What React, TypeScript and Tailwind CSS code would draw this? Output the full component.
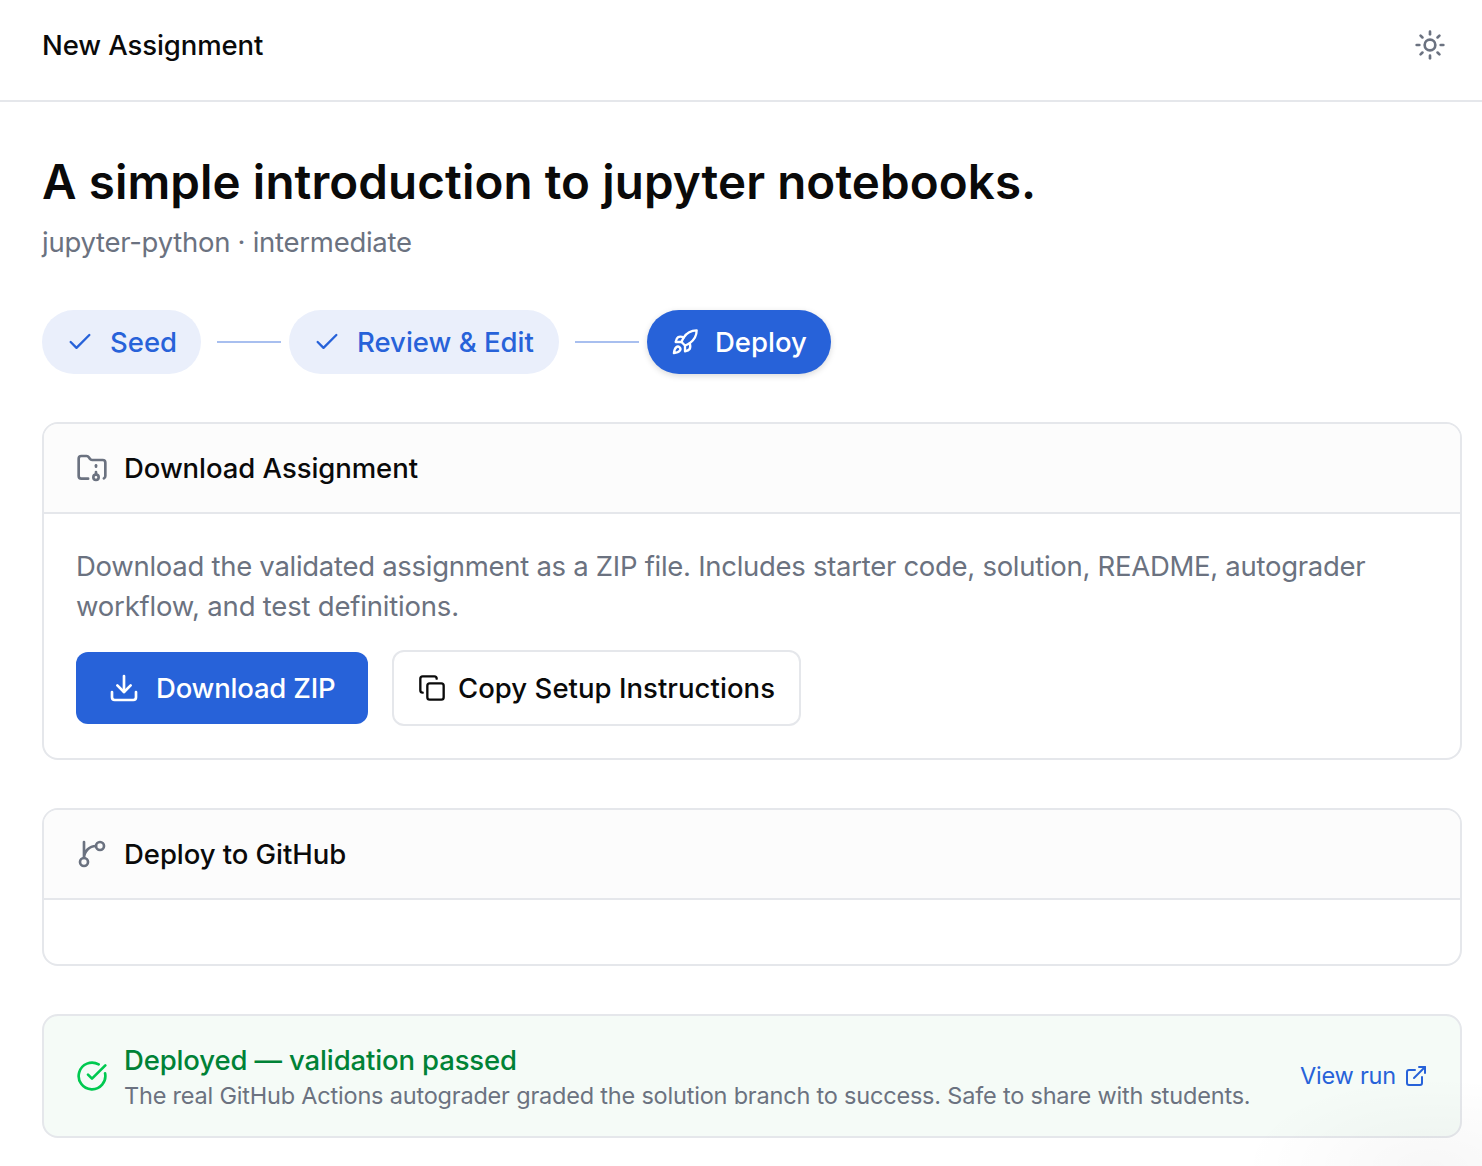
import type { ReactNode } from 'react'
import { Check, CircleCheckBig, Copy, Download, ExternalLink, FolderArchive, Rocket, Sun } from 'lucide-react'

function GitBranchIcon() {
  return (
    <svg
      viewBox="0 0 24 24"
      fill="none"
      stroke="currentColor"
      strokeWidth={2}
      strokeLinecap="round"
      strokeLinejoin="round"
      className="size-8 shrink-0 text-[#6b7280]"
    >
      <path d="M15 6a9 9 0 0 0-9 9V3" />
      <circle cx="18" cy="6" r="3" />
      <circle cx="6" cy="18" r="3" />
    </svg>
  )
}

function StepLine() {
  return <div className="ml-4 mr-2 h-0.5 w-16 shrink-0 bg-[#a8bfef]" />
}

interface CardProps {
  icon: ReactNode
  title: ReactNode
  children?: ReactNode
}

function Card({ icon, title, children }: CardProps) {
  return (
    <section className="overflow-hidden rounded-2xl border-2 border-[#e5e7eb] bg-white">
      <div className="flex items-center gap-4 border-b-2 border-[#e5e7eb] bg-[#fcfcfc] px-8 py-6">
        {icon}
        <h2 className="text-[27.5px] leading-10 font-medium tracking-[-0.06px] whitespace-nowrap">{title}</h2>
      </div>
      <div className="p-8">{children}</div>
    </section>
  )
}

export default function App() {
  return (
    <div className="relative h-[1166px] w-[1482px] overflow-hidden bg-white font-['Inter',sans-serif] text-[#0a0a0a]">
      <header className="flex h-[102px] items-start justify-between border-b-2 border-[#e5e7eb] pt-[25px] pr-9 pl-[42px]">
        <span className="text-[27.5px] leading-10 font-medium tracking-[-0.1px]">New Assignment</span>
        <Sun className="mt-1 size-8 text-[#6b7280]" />
      </header>

      <main className="pt-[50px] pr-5 pl-[42px]">
        <h1 className="text-[47.5px] leading-[60px] font-semibold tracking-[0.1px] whitespace-nowrap">
          A simple introduction to jupyter notebooks.
        </h1>
        <p className="mt-[10px] text-[27.5px] leading-10 tracking-[-0.27px] text-[#6b7280]">
          jupyter-python · intermediate
        </p>

        {/* Steps */}
        <div className="mt-12 flex items-center">
          <div className="flex h-16 w-[159px] items-center gap-4 rounded-full bg-[#eaeffb] px-6 text-[#2762d9]">
            <Check className="size-7 shrink-0" />
            <span className="text-[27.5px] leading-10 font-medium whitespace-nowrap">Seed</span>
          </div>
          <StepLine />
          <div className="flex h-16 w-[270px] items-center gap-4 rounded-full bg-[#eaeffb] px-6 text-[#2762d9]">
            <Check className="size-7 shrink-0" />
            <span className="text-[27.5px] leading-10 font-medium whitespace-nowrap">Review &amp; Edit</span>
          </div>
          <StepLine />
          <div className="flex h-16 w-[184px] items-center gap-4 rounded-full bg-[#2762d9] px-6 text-white shadow-[0_2px_6px_rgba(0,0,0,0.15)]">
            <Rocket className="size-7 shrink-0" />
            <span className="text-[27.5px] leading-10 font-medium whitespace-nowrap">Deploy</span>
          </div>
        </div>

        <div className="mt-12 flex flex-col gap-12">
          <Card icon={<FolderArchive className="size-8 shrink-0 text-[#6b7280]" />} title="Download Assignment">
            <p className="text-[27.5px] leading-10 whitespace-nowrap text-[#6b7280]">
              <span className="tracking-[-0.285px]">
                Download the validated assignment as a ZIP file. Includes starter code, solution, README, autograder
              </span>
              <br />
              <span className="tracking-[-0.2px]">workflow, and test definitions.</span>
            </p>
            <div className="mt-6 flex items-center gap-6">
              <button className="flex h-[72px] w-[292px] items-center gap-4 rounded-xl bg-[#2762d9] px-8 text-white">
                <Download className="size-8 shrink-0" />
                <span className="text-[27.5px] leading-10 font-medium tracking-[-0.2px] whitespace-nowrap">
                  Download ZIP
                </span>
              </button>
              <button className="flex h-[76px] w-[409px] items-center gap-3 rounded-xl border-2 border-[#e5e7eb] bg-white px-6">
                <Copy className="size-7 shrink-0" />
                <span className="text-[27.5px] leading-10 font-medium tracking-[0.04px] whitespace-nowrap">
                  Copy Setup Instructions
                </span>
              </button>
            </div>
          </Card>

          <Card icon={<GitBranchIcon />} title="Deploy to GitHub" />

          {/* Validation result */}
          <section className="flex items-center gap-4 rounded-2xl border-2 border-[#e5e7eb] bg-[#f5fbf7] px-8 py-6">
            <CircleCheckBig className="size-8 shrink-0 text-[#00c950]" />
            <div className="min-w-0 flex-1 whitespace-nowrap">
              <p className="text-[27.5px] leading-10 font-medium tracking-[-0.14px] text-[#008236]">
                Deployed — validation passed
              </p>
              <p className="text-[23.5px] leading-8 tracking-[-0.2px] text-[#6b7280]">
                The real GitHub Actions autograder graded the solution branch to success. Safe to share with students.
              </p>
            </div>
            <a className="flex shrink-0 items-center gap-2 text-[23.5px] leading-8 tracking-[-0.2px] text-[#2762d9]">
              View run
              <ExternalLink className="size-6" />
            </a>
          </section>
        </div>
      </main>

      <div className="pointer-events-none absolute right-0 bottom-0 h-[90px] w-[240px] bg-[radial-gradient(ellipse_190px_90px_at_190px_100%,rgba(0,0,0,0.03),transparent)]" />
    </div>
  )
}
